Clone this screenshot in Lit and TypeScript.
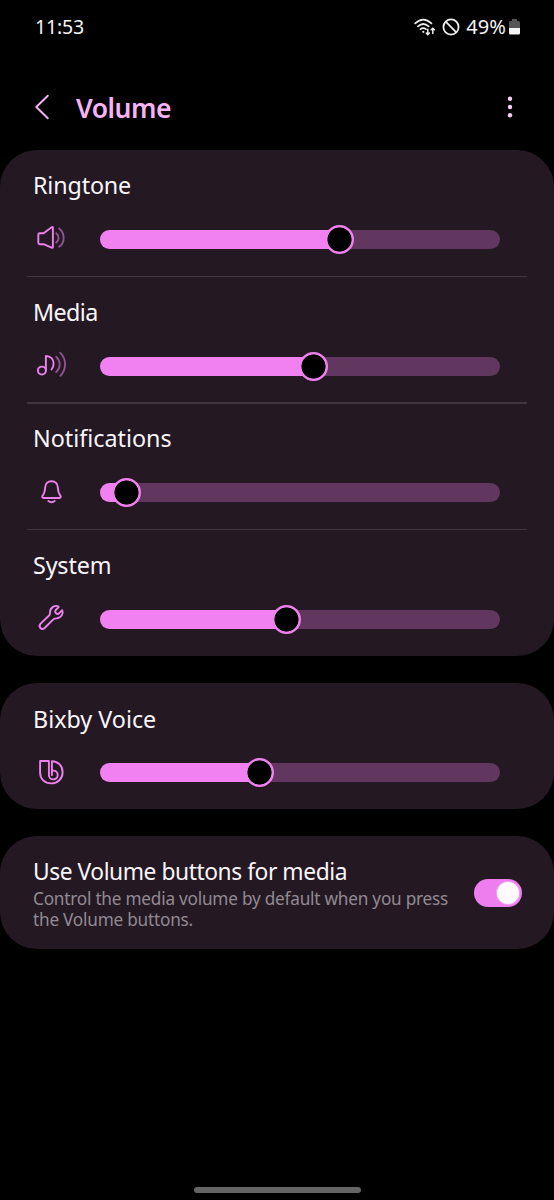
import { LitElement, html, css, svg } from "lit";
import { customElement, property } from "lit/decorators.js";

const icons: Record<string, unknown> = {
  ringtone: svg`
    <path d="M8.8 14.2H12.6L20.6 8.2Q21.9 7.4 21.9 8.8V28Q21.9 29.4 20.6 28.6L12.6 25.2H8.8Q7.3 25.2 7.3 23.7V15.7Q7.3 14.2 8.8 14.2Z"/>
    <g class="dim"><path d="M25.2 14.2Q27.6 16 27.6 19T25.2 23.6"/><path d="M28.2 9.6Q32.6 13.2 32.6 18.9T28.2 27.8"/></g>`,
  media: svg`
    <circle cx="10.9" cy="24.6" r="4"/><path d="M14.9 24.6V10C19.5 10.2 22.6 13 22.6 17.6Q22.6 21 20.6 23.5"/>
    <g class="dim"><path d="M25.2 10.8Q28.7 14 28.7 18.4T25.2 26"/><path d="M29.4 6.8Q34.1 11.8 34.1 18.3T29.4 29.8"/></g>`,
  bell: svg`
    <path d="M20.5 8.2C16.6 8.2 14.4 11 14.2 14.2C14 18 14 19.6 12 22.2C10.6 24 11.2 25 12.6 25H28.4C29.8 25 30.4 24 29 22.2C27 19.6 27 18 26.8 14.2C26.6 11 24.4 8.2 20.5 8.2Z"/>
    <path d="M17.3 28Q20.5 30.4 23.7 28"/>`,
  system: svg`
    <path d="M27.2 7.3C23.4 5.8 19 9 19.1 13.2C19.1 14.8 18.8 15.8 17.8 16.8L9.6 24.6C6.8 27.8 10.6 31.6 13.6 29L21.8 20.8C22.8 19.8 24 19.5 25.4 19.4C30 19.2 32.8 14.8 31.2 11.2L28.2 14.2Q26.6 15.6 25 14.2Q23.4 12.6 24.8 11L27.4 8.4Q27.9 7.7 27.2 7.3Z"/>`,
  bixby: svg`
    <path d="M9.1 8H17.9V22.2A4.4 4.4 0 1 0 22.2 17.6H20.9V8.2C27.3 8.4 31.6 13 31.6 19.2C31.6 25.8 26.8 30.4 20.3 30.4C13.6 30.4 9.1 26 9.1 19.5Z"/>
    <path d="M20.9 17.6V22"/>`,
};

@customElement("volume-row")
class VolumeRow extends LitElement {
  @property() label = "";
  @property() icon = "";
  @property({ type: Number }) value = 0;
  @property({ type: Number }) spacing = 0;

  static styles = css`
    :host { display: block; box-sizing: border-box; height: 126.6px; padding: 19.8px 54px 0 33px; }
    .label { height: 32px; line-height: 32px; font-size: 23.3px; color: #faf5fa; white-space: nowrap; }
    .control { display: flex; align-items: center; height: 40px; margin: 18.2px 0 0 -2px; }
    svg { width: 40px; height: 40px; flex: none; fill: none; stroke: #ee80ee; stroke-width: 1.9; stroke-linecap: round; stroke-linejoin: round; }
    .dim { stroke: #8f5290; }
    .track { flex: none; width: 400px; height: 19px; margin-left: 29px; border-radius: 10px; background: #62375f; display: flex; align-items: center; }
    .fill { height: 19px; border-radius: 10px 0 0 10px; background: #f180f0; }
    .thumb { flex: none; width: 29px; height: 29px; margin-left: -14.6px; border-radius: 50%; background: radial-gradient(circle, #000 11.7px, #f180f0 12.4px); }
  `;

  render() {
    return html`
      <div class="label" style="letter-spacing:${this.spacing}px">${this.label}</div>
      <div class="control">
        <svg viewBox="0 0 40 40">${icons[this.icon]}</svg>
        <div class="track">
          <div class="fill" style="width:${this.value}%"></div>
          <div class="thumb"></div>
        </div>
      </div>`;
  }
}

@customElement("app-root")
class AppRoot extends LitElement {
  static styles = css`
    :host { display: flex; flex-direction: column; box-sizing: border-box; height: 1200px; width: 554px; background: #000; font-family: "Noto Sans", sans-serif; overflow: hidden; }
    .status { display: flex; align-items: center; justify-content: space-between; height: 54px; padding: 0 34px 0 35px; color: #f4f4f4; font-size: 19.5px; flex: none; }
    .time { letter-spacing: -0.2px; margin-top: -1px; }
    .right { display: flex; align-items: center; }
    .wifi { width: 22px; height: 20px; margin-right: 6.5px; }
    .ban { width: 18px; height: 18px; margin-right: 6px; }
    .pct { font-size: 20px; letter-spacing: 0.1px; margin-top: -1px; }
    .battery { width: 11px; height: 16px; margin-left: 3px; }
    .header { display: flex; align-items: center; height: 95.5px; box-sizing: border-box; padding: 19px 39px 6px 33px; flex: none; }
    .back { width: 18px; height: 30px; margin-right: 25px; margin-top: -3px; }
    h1 { flex: 1; margin: 0; font-size: 26.5px; font-weight: 600; line-height: 40px; letter-spacing: -0.5px; color: #f5b3f5; }
    .more { width: 10px; height: 26px; margin-top: -3px; }
    .card { background: #241923; border-radius: 37px; margin-bottom: 27px; flex: none; }
    .divider { height: 1.5px; margin: -1.5px 27px 0; background: #403540; transform: translateY(1px); }
    .setting { display: flex; align-items: center; height: 113px; box-sizing: border-box; padding: 0 32px 0 33px; }
    .copy { flex: 1; padding-top: 3px; }
    .title { font-size: 22.8px; line-height: 28px; letter-spacing: -0.45px; color: #faf5fa; white-space: nowrap; }
    .desc { margin-top: 2px; font-size: 17.2px; line-height: 21px; letter-spacing: -0.22px; color: #928a92; }
    .desc div { height: 21px; white-space: nowrap; }
    .toggle { display: flex; justify-content: flex-end; align-items: center; box-sizing: border-box; width: 48px; height: 28px; padding-right: 3px; border-radius: 14px; background: #ee7ded; }
    .knob { width: 22px; height: 22px; border-radius: 50%; background: #fefafe; box-shadow: 0 0 0 1px #f3a6f2; }
    .home { width: 167px; height: 6px; border-radius: 3px; background: #656565; margin: auto auto 7px; }
  `;

  render() {
    return html`
      <div class="status">
        <span class="time">11:53</span>
        <div class="right">
          <svg class="wifi" viewBox="0 0 22 20" fill="none" stroke="#eee" stroke-width="1.7" stroke-linecap="round">
            <path d="M1.2 6.4Q9.3 -1.2 17.4 6.4"/><path d="M3.9 9.4Q9.3 4.6 14.7 9.4"/><path d="M6.5 12.2Q9.3 10 12 12.2"/>
            <circle cx="9.3" cy="14.8" r="1.1" fill="#eee" stroke="none"/>
            <path stroke-width="1.5" d="M13.8 12.2V17.5M12.2 16L13.8 17.7L15.4 16M18.8 16.5V11.4M17.2 12.8L18.8 11.2L20.4 12.8"/>
          </svg>
          <svg class="ban" viewBox="0 0 18 18" fill="none" stroke="#eee" stroke-width="1.8"><circle cx="9" cy="9" r="7.6"/><path d="M3.7 3.7L14.3 14.3"/></svg>
          <span class="pct">49%</span>
          <svg class="battery" viewBox="0 0 11 16"><path fill="#555" d="M3 0H8V2H9.5Q11 2 11 3.5V9H0V3.5Q0 2 1.5 2H3Z"/><path fill="#f4f4f4" d="M0 9H11V14Q11 15.5 9.5 15.5H1.5Q0 15.5 0 14Z"/></svg>
        </div>
      </div>
      <div class="header">
        <svg class="back" viewBox="0 0 18 30" fill="none" stroke="#f5b3f5" stroke-width="1.9" stroke-linecap="round" stroke-linejoin="round"><path d="M14.8 3.7L3.3 15L14.8 26.3"/></svg>
        <h1>Volume</h1>
        <svg class="more" viewBox="0 0 10 26" fill="#f7cdf7"><circle cx="5" cy="4.7" r="2.2"/><circle cx="5" cy="13" r="2.2"/><circle cx="5" cy="21.3" r="2.2"/></svg>
      </div>
      <div class="card">
        <volume-row label="Ringtone" icon="ringtone" value="60" spacing="-0.15"></volume-row>
        <div class="divider"></div>
        <volume-row label="Media" icon="media" value="53.35" spacing="-0.6"></volume-row>
        <div class="divider"></div>
        <volume-row label="Notifications" icon="bell" value="6.65"></volume-row>
        <div class="divider"></div>
        <volume-row label="System" icon="system" value="46.7" spacing="-0.15"></volume-row>
      </div>
      <div class="card"><volume-row label="Bixby Voice" icon="bixby" value="40"></volume-row></div>
      <div class="card setting">
        <div class="copy">
          <div class="title">Use Volume buttons for media</div>
          <div class="desc">
            <div>Control the media volume by default when you press</div>
            <div>the Volume buttons.</div>
          </div>
        </div>
        <div class="toggle"><div class="knob"></div></div>
      </div>
      <div class="home"></div>`;
  }
}
